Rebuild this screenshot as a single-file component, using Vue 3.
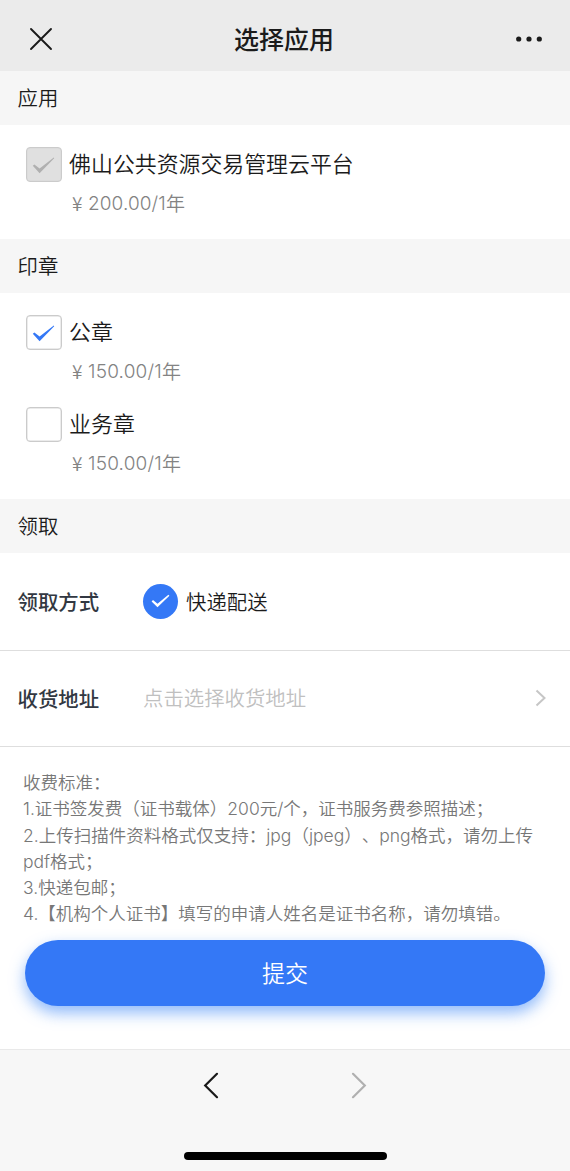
<script setup>
const seals = [
  { name: '公章', amount: '150.00/1', checked: true },
  { name: '业务章', amount: '150.00/1', checked: false },
]
</script>

<template>
  <div class="page">
    <header class="navbar">
      <svg class="close" width="24" height="24" viewBox="0 0 24 24"><path d="M2 2L22 22M22 2L2 22" /></svg>
      <h1>选择应用</h1>
      <svg class="more" width="28" height="8" viewBox="0 0 28 8">
        <circle cx="3.7" cy="4" r="2.6" /><circle cx="14" cy="4" r="2.6" /><circle cx="24.3" cy="4" r="2.6" />
      </svg>
    </header>

    <h2>应用</h2>
    <section class="group">
      <div class="item">
        <div class="option">
          <span class="box disabled"><svg width="23" height="17" viewBox="0 0 23 17"><path d="M.8 8.8L2.4 7.4L7.6 11.4L21.8 .6L22.2 1.2L7.6 16.2Z" /></svg></span>
          <span>佛山公共资源交易管理云平台</span>
        </div>
        <div class="price"><i>¥</i><b>200.00/1</b>年</div>
      </div>
    </section>

    <h2>印章</h2>
    <section class="group">
      <div v-for="s in seals" :key="s.name" class="item">
        <div class="option">
          <span class="box"><svg v-if="s.checked" width="23" height="17" viewBox="0 0 23 17"><path d="M.8 8.8L2.4 7.4L7.6 11.4L21.8 .6L22.2 1.2L7.6 16.2Z" /></svg></span>
          <span>{{ s.name }}</span>
        </div>
        <div class="price seal-price"><i>¥</i><b>{{ s.amount }}</b>年</div>
      </div>
    </section>

    <h2>领取</h2>
    <div class="row method">
      <span class="label">领取方式</span>
      <span class="radio"><svg width="19" height="14" viewBox="0 0 19 14"><path d="M.6 7.4L2 6.1L6.5 9.7L17.4 .8L18.4 1.8L6.5 13.2Z" /></svg></span>
      <span class="radio-text">快递配送</span>
    </div>
    <div class="row address">
      <span class="label">收货地址</span>
      <span class="placeholder">点击选择收货地址</span>
      <svg class="arrow" width="12" height="18" viewBox="0 0 12 18"><path d="M1.5 1.5L9.5 9L1.5 16.5" /></svg>
    </div>

    <div class="notes">
      <p>收费标准：</p>
      <p><b>1.</b>证书签发费（证书载体）<b>200</b>元<b>/</b>个，证书服务费参照描述；</p>
      <p><b>2.</b>上传扫描件资料格式仅支持：<b>jpg</b>（<b>jpeg</b>）、<b>png</b>格式，请勿上传</p>
      <p><b>pdf</b>格式；</p>
      <p><b>3.</b>快递包邮；</p>
      <p><b>4.</b>【机构个人证书】填写的申请人姓名是证书名称，请勿填错。</p>
    </div>
    <button class="submit">提交</button>

    <footer class="toolbar">
      <div class="history">
        <svg width="16" height="27" viewBox="0 0 16 27"><path d="M14 1.8L2.2 13.5L14 25.2" /></svg>
        <svg class="off" width="16" height="27" viewBox="0 0 16 27"><path d="M2 1.8L13.8 13.5L2 25.2" /></svg>
      </div>
      <div class="home"></div>
    </footer>
  </div>
</template>

<style>
body { margin: 0; background: #fff; }
</style>

<style scoped>
.page {
  width: 570px; height: 1171px; display: flex; flex-direction: column; overflow: hidden;
  background: #fff; color: #1b1b1b; font-family: "Noto Sans CJK SC", sans-serif; font-weight: 350;
  text-spacing-trim: space-all;
}
h1, h2, p { margin: 0; }
svg { display: block; flex: none; }
b { font-family: Inter, sans-serif; font-weight: 300; }
.navbar {
  height: 71px; box-sizing: border-box; padding: 7px 27px 0 29px; background: #ebebeb;
  display: flex; align-items: center; justify-content: space-between;
}
.close { fill: none; stroke: #1a1a1a; stroke-width: 1.9; stroke-linecap: round; }
.more { fill: #1a1a1a; }
h1 { font-size: 25px; line-height: 36px; font-weight: 500; padding-bottom: 2px; }
h2 {
  height: 54px; line-height: 52px; padding-left: 17.5px; background: #f6f6f6;
  font-size: 20.4px; font-weight: 350; flex: none;
}
.group { padding: 11px 0; }
.item { height: 92px; }
.option { height: 57px; padding-left: 26px; display: flex; align-items: center; gap: 7.6px; font-size: 21.9px; }
.option > span:last-child { padding-bottom: 4px; }
.option .box {
  width: 35.5px; height: 35px; box-sizing: border-box; border: 1px solid #cbcbcb; border-radius: 4px;
  display: flex; align-items: center; justify-content: center; padding: 2px 0 0; flex: none;
  box-shadow: inset 0 0 0 .5px #d8d8d8;
}
.box path { fill: #3478f6; }
.box.disabled { background: #e0e0e0; }
.box.disabled path { fill: #b0b0b0; }
.price {
  height: 20px; line-height: 19px; padding-left: 72px; display: flex; color: #838383;
  font-size: 19px;
}
.price b { padding-top: 1px; letter-spacing: .1px; }
.seal-price b { letter-spacing: .2px; }
.price i { width: 16px; font-style: normal; }
.row { box-sizing: border-box; border-bottom: 1px solid #dedede; display: flex; align-items: center; font-size: 20.4px; padding-left: 17.5px; flex: none; }
.method { height: 98px; padding-bottom: 1px; }
.address { height: 96px; padding-bottom: 1px; }
.label { width: 125.5px; font-weight: 500; color: #323842; }
.address .label { padding-bottom: 1px; }
.radio { width: 35px; height: 35px; border-radius: 50%; background: #3478f6; display: flex; align-items: center; justify-content: center; }
.radio path { fill: #fff; }
.radio-text { margin-left: 8px; }
.placeholder { color: #c0c0c0; padding-bottom: 2px; }
.arrow { margin-left: auto; margin-right: 23px; fill: none; stroke: #c6c6c6; stroke-width: 2; }
.notes { padding: 22px 0 0 23px; font-size: 17.5px; color: #777; white-space: nowrap; }
.notes p { height: 26.3px; line-height: 26px; }
.submit {
  margin: 13px 25px 0; height: 66px; flex: none; border: 0; border-radius: 33px; background: #3478f6; color: #fff;
  padding: 0 0 2px; font: 350 23px "Noto Sans CJK SC", sans-serif; box-shadow: 0 7px 15px rgba(52, 130, 246, .55);
}
.toolbar {
  margin-top: auto; height: 122px; flex: none; box-sizing: border-box; border-top: 1px solid #e9e9e9; background: #f7f7f7;
  display: flex; flex-direction: column; align-items: center; justify-content: space-between; padding: 22px 0 11px;
}
.history { display: flex; gap: 132px; }
.history svg { fill: none; stroke: #1a1a1a; stroke-width: 2.2; stroke-linecap: round; }
.history .off { stroke: #b0b0b0; }
.home { width: 203px; height: 8px; border-radius: 4px; background: #000; }
</style>
